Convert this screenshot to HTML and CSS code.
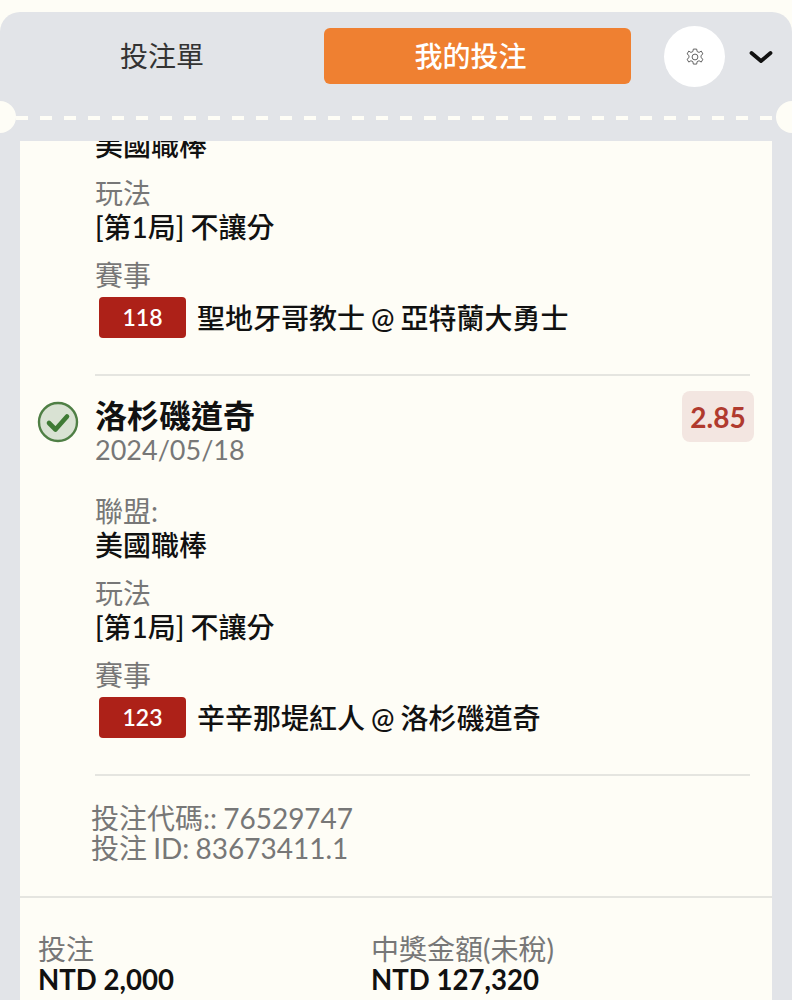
FILE: index.html
```html
<!DOCTYPE html>
<html lang="zh-Hant">
<head>
  <meta charset="UTF-8">
  <title>我的投注</title>
  <link rel="stylesheet" href="styles.css">
</head>
<body>
  <div class="panel">
    <div class="tabs">
      <div class="tab">投注單</div>
      <div class="tab active">我的投注</div>
      <div class="gear">
        <svg width="20" height="20" viewBox="0 0 24 24" fill="none" stroke="#555" stroke-width="1.100" stroke-linejoin="round">
          <path d="M10 2.5h4l.6 3 2.3 1 2.6-1.600 2 3.400-2.300 2 0 2.400 2.300 2-2 3.400-2.600-1.600-2.300 1-.6 3h-4l-.6-3-2.300-1-2.600 1.600-2-3.400 2.300-2 0-2.400-2.300-2 2-3.400 2.600 1.600 2.300-1z"/>
          <circle cx="12" cy="12" r="3.500"/>
        </svg>
      </div>
      <div class="chevron">
        <svg width="24" height="14" viewBox="0 0 24 14" fill="none" stroke="#111" stroke-width="3.800" stroke-linecap="round" stroke-linejoin="round">
          <path d="M2.500 3l9.500 8 9.500-8"/>
        </svg>
      </div>
    </div>
    <div class="perforation">
      <span class="notch left"></span>
      <span class="notch right"></span>
    </div>

    <div class="sheet">
      <div class="bets">
        <div class="bet first">
          <div class="field clipped">
            <div class="value">美國職棒</div>
          </div>
          <div class="field">
            <div class="label">玩法</div>
            <div class="value">[第1局] 不讓分</div>
          </div>
          <div class="field">
            <div class="label">賽事</div>
            <div class="match">
              <span class="code">118</span>
              <span class="value">聖地牙哥教士 @ 亞特蘭大勇士</span>
            </div>
          </div>
        </div>

        <div class="bet">
          <div class="bet-head">
            <svg class="check" width="42" height="42" viewBox="0 0 42 42">
              <circle cx="21" cy="21" r="19" fill="#d9e2d3" stroke="#4f7f45" stroke-width="2.400"/>
              <path d="M12 22l6.500 6.500L30 15.500" fill="none" stroke="#3f7a35" stroke-width="4.600" stroke-linecap="round" stroke-linejoin="round"/>
            </svg>
            <div class="team">
              <div class="team-name">洛杉磯道奇</div>
              <div class="date">2024/05/18</div>
            </div>
            <div class="odds">2.85</div>
          </div>
          <div class="field">
            <div class="label">聯盟:</div>
            <div class="value">美國職棒</div>
          </div>
          <div class="field">
            <div class="label">玩法</div>
            <div class="value">[第1局] 不讓分</div>
          </div>
          <div class="field">
            <div class="label">賽事</div>
            <div class="match">
              <span class="code">123</span>
              <span class="value">辛辛那堤紅人 @ 洛杉磯道奇</span>
            </div>
          </div>
        </div>
      </div>

      <div class="ids">
        <div>投注代碼:: 76529747</div>
        <div>投注 ID: 83673411.1</div>
      </div>

      <div class="totals">
        <div class="total">
          <div class="label">投注</div>
          <div class="amount">NTD 2,000</div>
        </div>
        <div class="total">
          <div class="label">中獎金額(未稅)</div>
          <div class="amount">NTD 127,320</div>
        </div>
      </div>
    </div>
  </div>
</body>
</html>
```

FILE: styles.css
```css
html, body {
  margin: 0;
  height: 1000px;
  overflow: hidden;
}
body {
  font-family: Lato, "Noto Sans CJK TC", sans-serif;
  background-color: #fefdf6;
  color: #111;
  padding-top: 12px;
  box-sizing: border-box;
}
.panel {
  background: #e2e4e8;
  border-radius: 20px 20px 0 0;
  height: 988px;
  overflow: hidden;
}
.tabs {
  display: flex;
  align-items: center;
  height: 88px;
}
.tab {
  width: 308px;
  height: 56px;
  line-height: 56px;
  text-align: center;
  font-size: 28px;
  color: #333;
  border-radius: 6px;
  margin-left: 8px;
}
.tab.active {
  width: 293px;
  padding-right: 14px;
  background: #ef8031;
  color: #fff;
  font-weight: 500;
}
.gear {
  width: 61px;
  height: 61px;
  border-radius: 50%;
  background: #fff;
  margin: 1px 0 0 33px;
  display: flex;
  align-items: center;
  justify-content: center;
}
.chevron {
  margin: 1px 0 0 24px;
  display: flex;
}
.perforation {
  position: relative;
  height: 41px;
  background-image: repeating-linear-gradient(90deg, #fefdf6 0 12px, transparent 12px 24px);
  background-size: 100% 4px;
  background-repeat: no-repeat;
  background-position: 16px 16px;
}
.notch {
  position: absolute;
  top: 1px;
  width: 32px;
  height: 32px;
  border-radius: 50%;
  background: #fefdf6;
}
.notch.left { left: -16px; }
.notch.right { right: -16px; }
.sheet {
  margin: 0 20px;
  background: #fefdf6;
  height: 859px;
  overflow: hidden;
}
.bets {
  padding-left: 75px;
  padding-right: 22px;
}
.bet {
  padding-bottom: 22px;
  border-bottom: 2px solid #e5e5e0;
  margin-bottom: 15px;
}
.bet-head {
  display: flex;
  position: relative;
  align-items: flex-start;
  margin-bottom: 29px;
}
.check {
  position: absolute;
  left: -58px;
  top: 10px;
}
.team {
  flex: 1;
  padding-top: 7px;
}
.team-name {
  font-size: 32px;
  font-weight: 700;
  line-height: 36px;
}
.date {
  font-size: 27px;
  color: #777;
  line-height: 31px;
}
.odds {
  background: #f3e6e1;
  color: #b03a2e;
  font-size: 28px;
  font-weight: 700;
  border-radius: 8px;
  width: 72px;
  height: 51px;
  line-height: 53px;
  text-align: center;
  margin-right: -4px;
}
.field {
  margin-bottom: 14px;
}
.field.clipped {
  margin-top: -13px;
}
.label {
  font-size: 28px;
  line-height: 34px;
  color: #777;
}
.value {
  font-size: 28px;
  line-height: 34px;
  font-weight: 500;
  word-spacing: -1px;
}
.match {
  display: flex;
  align-items: center;
  margin-top: 5px;
}
.code {
  background: #ad2118;
  color: #fff;
  width: 87px;
  height: 41px;
  line-height: 41px;
  text-align: center;
  font-size: 23px;
  font-weight: 600;
  border-radius: 4px;
  margin-left: 4px;
  margin-right: 11px;
}
.ids {
  padding: 12px 0 33px 71px;
  font-size: 28px;
  line-height: 30px;
  color: #777;
  word-spacing: -1px;
  border-bottom: 2px solid #e5e5e0;
}
.totals {
  display: flex;
  padding: 34px 18px 0;
}
.total {
  width: 333px;
}
.amount {
  font-size: 27.600px;
  font-weight: 700;
  line-height: 28px;
}
```
